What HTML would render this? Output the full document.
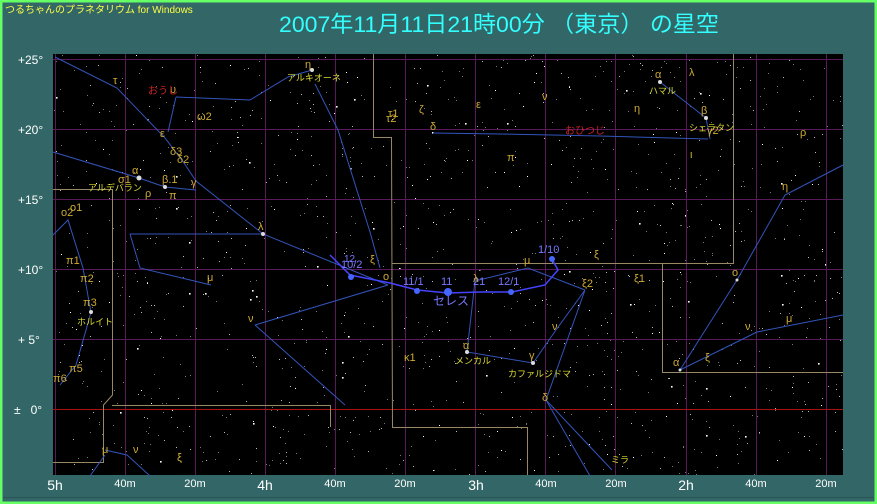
<!DOCTYPE html>
<html><head><meta charset="utf-8"><style>
html,body{margin:0;padding:0;background:#336666;}
#w{position:relative;width:877px;height:504px;overflow:hidden;background:#336666;}
svg{position:absolute;left:0;top:0;}
text{font-family:"Liberation Sans","Noto Sans CJK JP",sans-serif;}
</style></head><body><div id="w">
<svg id="s" width="877" height="504" viewBox="0 0 877 504" xmlns="http://www.w3.org/2000/svg">
<rect x="0" y="0" width="877" height="504" fill="#336666"/>
<rect x="1" y="1" width="875" height="502" fill="none" stroke="#66ff66" stroke-width="3"/>
<line x1="3" y1="497.5" x2="874" y2="497.5" stroke="#2a5555" stroke-width="1"/>
<text x="5" y="13" font-size="10" fill="#ffff44">つるちゃんのプラネタリウム for Windows</text>
<text x="279" y="32" font-size="22.5" fill="#33ffff" textLength="440" lengthAdjust="spacingAndGlyphs">2007年11月11日21時00分 （東京） の星空</text>
<rect x="53" y="54" width="790" height="421" fill="#000"/>
<g id="stars"></g>
<g stroke="#5a1a5a" stroke-width="1">
<line x1="55.5" y1="54" x2="55.5" y2="475"/><line x1="125.5" y1="54" x2="125.5" y2="475"/><line x1="195.5" y1="54" x2="195.5" y2="475"/><line x1="265.5" y1="54" x2="265.5" y2="475"/><line x1="335.5" y1="54" x2="335.5" y2="475"/><line x1="405.5" y1="54" x2="405.5" y2="475"/><line x1="475.5" y1="54" x2="475.5" y2="475"/><line x1="545.5" y1="54" x2="545.5" y2="475"/><line x1="615.5" y1="54" x2="615.5" y2="475"/><line x1="686.5" y1="54" x2="686.5" y2="475"/><line x1="756.5" y1="54" x2="756.5" y2="475"/><line x1="826.5" y1="54" x2="826.5" y2="475"/>
<line x1="53" y1="59.5" x2="843" y2="59.5"/><line x1="53" y1="129.5" x2="843" y2="129.5"/><line x1="53" y1="199.5" x2="843" y2="199.5"/><line x1="53" y1="269.5" x2="843" y2="269.5"/><line x1="53" y1="339.5" x2="843" y2="339.5"/>
</g>
<line x1="53" y1="409.5" x2="843" y2="409.5" stroke="#aa1111" stroke-width="1"/>
<g fill="none" stroke="#998866" stroke-width="1">
<polyline points="373.5,54 373.5,137.5 391.5,137.5 392.5,427.5 527.5,427.5 527.5,475"/>
<polyline points="392,263.5 733.5,263.5 733.5,54"/>
<polyline points="662.5,263.5 662.5,372.5 843,372.5"/>
<polyline points="53,189.5 112.5,189.5 112.5,395 103.5,405 103.5,462.5 53,462.5"/>
<polyline points="112,405.5 330.5,405.5 330.5,427"/>
</g>
<g fill="none" stroke="#3355bb" stroke-width="1">
<polyline points="55,57 117,88 165,138 184,163 196,181 263,234 388,285"/>
<polyline points="176,97 168,132"/>
<polyline points="176,97 250,100 288,77 312,70"/>
<polyline points="53,152 139,178 165,187 196,190"/>
<polyline points="130,234 263,234"/>
<polyline points="130,234 140,268 211,285"/>
<polyline points="255,325 388,285"/>
<polyline points="255,325 345,405"/>
<polyline points="53,235 68,220 83,268 88,296 91,312 86,330 76,365 60,385"/>
<polyline points="315,84 338,130 370,232 380,268"/>
<polyline points="433,133 500,134 600,136 708,139"/>
<polyline points="660,82 706,118 710,139"/>
<polyline points="475,281 528,268 585,290"/>
<polyline points="475,281 467,352 533,363 556,330 585,290 546,400 612,470"/>
<polyline points="546,400 590,476"/>
<polyline points="843,165 785,195 737,280 680,370 757,332 843,315"/>
<polyline points="105,450 127,455 150,476"/>
<polyline points="90,476 105,455"/>
</g>
<g fill="none" stroke="#4444ff" stroke-width="1.5">
<polyline points="330,255 350,275 390,283 417,290 448,293 480,292 512,292 545,285 558,270 552,259"/>
</g>
<g fill="#4466ff">
<circle cx="351" cy="277" r="3"/><circle cx="417" cy="291" r="3"/><circle cx="448" cy="292" r="4"/><circle cx="511" cy="292" r="3"/><circle cx="552" cy="259" r="3"/>
</g>
<g fill="#7777ff" font-size="11">
<text x="341" y="268">10/2</text><text x="344" y="262" font-size="10">12</text><text x="403" y="285">11/1</text><text x="441" y="285">11</text><text x="473" y="285">21</text><text x="498" y="285">12/1</text><text x="538" y="253">1/10</text>
<text x="433" y="305" font-size="12">セレス</text>
</g>
<g fill="#dddddd">
<circle cx="139" cy="178" r="2.5"/><circle cx="165" cy="187" r="2"/><circle cx="312" cy="70" r="2"/><circle cx="660" cy="82" r="2"/><circle cx="706" cy="118" r="2"/><circle cx="467" cy="352" r="2"/><circle cx="533" cy="363" r="2"/><circle cx="91" cy="312" r="2"/><circle cx="263" cy="234" r="2"/><circle cx="737" cy="280" r="1.5"/><circle cx="680" cy="370" r="1.5"/>
</g>
<g fill="#ccaa33" font-size="11">
<text x="113" y="84">τ</text><text x="170" y="93">υ</text><text x="197" y="120">ω2</text><text x="160" y="137">ε</text><text x="170" y="155">δ3</text><text x="177" y="163">δ2</text><text x="132" y="174">α</text><text x="118" y="183">σ1</text><text x="162" y="183">β.1</text><text x="145" y="197">ρ</text><text x="169" y="199">π</text><text x="191" y="186">γ</text>
<text x="70" y="211">ο1</text><text x="61" y="216">ο2</text><text x="66" y="264">π1</text><text x="80" y="282">π2</text><text x="83" y="306">π3</text><text x="69" y="372">π5</text><text x="53" y="382">π6</text>
<text x="258" y="230">λ</text><text x="207" y="281">μ</text><text x="248" y="322">ν</text><text x="370" y="263">ξ</text><text x="383" y="280">ο</text><text x="404" y="361">κ1</text>
<text x="305" y="68">η</text><text x="388" y="117">τ1</text><text x="386" y="122">τ2</text><text x="419" y="113">ζ</text><text x="476" y="108">ε</text><text x="430" y="130">δ</text><text x="542" y="100">ν</text><text x="507" y="161">π</text><text x="634" y="112">η</text><text x="655" y="78">α</text><text x="689" y="76">λ</text><text x="701" y="114">β</text><text x="707" y="134">γ2</text><text x="690" y="158">ι</text><text x="800" y="136">ρ</text>
<text x="473" y="282">λ</text><text x="524" y="264">μ</text><text x="594" y="258">ξ</text><text x="582" y="287">ξ2</text><text x="552" y="330">ν</text><text x="463" y="349">α</text><text x="529" y="359">γ</text><text x="542" y="401">δ</text><text x="634" y="282">ξ1</text><text x="732" y="276">ο</text><text x="782" y="190">η</text><text x="673" y="366">α</text><text x="705" y="361">ξ</text><text x="745" y="330">ν</text><text x="786" y="322">μ</text>
<text x="102" y="453">μ</text><text x="133" y="453">ν</text><text x="177" y="461">ξ</text>
</g>
<g fill="#dddd33" font-size="9">
<text x="287" y="81">アルキオーネ</text><text x="88" y="191">アルデバラン</text><text x="77" y="325">ホルイト</text><text x="455" y="364">メンカル</text><text x="508" y="377">カファルジドマ</text><text x="649" y="94">ハマル</text><text x="689" y="131">シェラタン</text><text x="611" y="463">ミラ</text>
</g>
<g fill="#cc2222" font-size="10"><text x="148" y="94">おうし</text><text x="565" y="134">おひつじ</text></g>
<g fill="#ffffff" font-size="12">
<text x="18" y="64">+25°</text><text x="18" y="134">+20°</text><text x="18" y="204">+15°</text><text x="18" y="274">+10°</text><text x="18" y="344">+ 5°</text><text x="14" y="414">±&#160;&#160;&#160;0°</text>
</g>
<g fill="#ffffff" font-size="14" text-anchor="middle"><text x="55" y="490">5h</text><text x="265" y="490">4h</text><text x="476" y="490">3h</text><text x="686" y="490">2h</text></g>
<g fill="#ffffff" font-size="11" text-anchor="middle"><text x="125" y="487">40m</text><text x="195" y="487">20m</text><text x="335" y="487">40m</text><text x="405" y="487">20m</text><text x="546" y="487">40m</text><text x="616" y="487">20m</text><text x="756" y="487">40m</text><text x="826" y="487">20m</text></g>
</svg>
<script>
(function(){var s=12345;function r(){s=(s*1103515245+12345)%2147483648;return s/2147483648;}
var g=document.getElementById('stars'),h='';
for(var i=0;i<1400;i++){var x=53+r()*790,y=54+r()*421,b=r();var c=b<0.6?'#777':(b<0.9?'#bbb':'#fff');var z=b>0.97?1.6:1;h+='<rect x="'+x.toFixed(0)+'" y="'+y.toFixed(0)+'" width="'+z+'" height="'+z+'" fill="'+c+'"/>';}
g.innerHTML=h;})();
</script>
</div></body></html>
